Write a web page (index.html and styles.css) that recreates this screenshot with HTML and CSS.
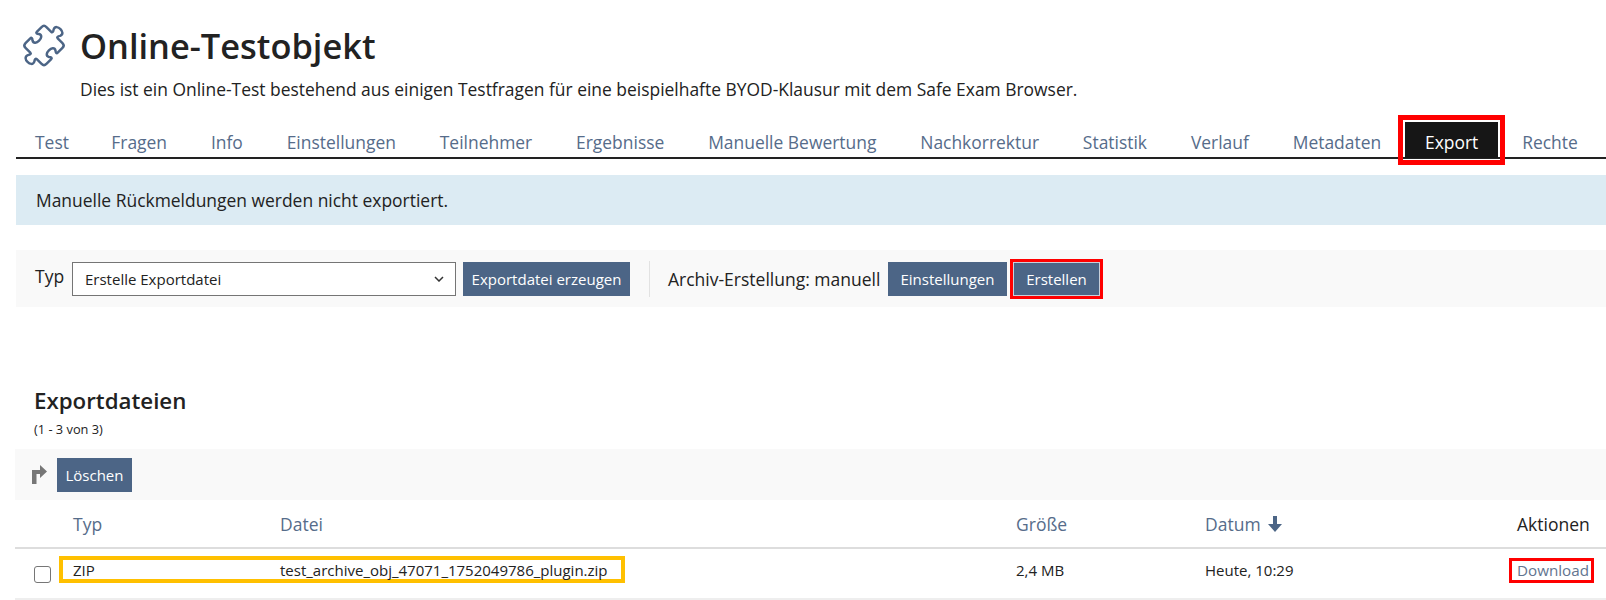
FILE: index.html
```html
<!DOCTYPE html>
<html lang="de">
<head>
<meta charset="utf-8">
<title>Online-Testobjekt</title>
<link rel="stylesheet" href="styles.css">
</head>
<body>
<header class="head">
  <svg class="puzzle" viewBox="-62 -62 124 124" aria-hidden="true"><path transform="rotate(45)" d="M-39 -30 Q-39 -39 -30 -39 L-12 -39 C-8 -39 -8 -43 -12 -48 C-20 -66 20 -66 12 -48 C8 -43 8 -39 12 -39 L30 -39 Q39 -39 39 -30 L39 -12 C39 -8 35 -8 31 -12 C14 -22 14 22 31 12 C35 8 39 8 39 12 L39 30 Q39 39 30 39 L12 39 C8 39 8 43 12 48 C20 66 -20 66 -12 48 C-8 43 -8 39 -12 39 L-30 39 Q-39 39 -39 30 L-39 12 C-39 8 -35 8 -31 12 C-14 22 -14 -22 -31 -12 C-35 -8 -39 -8 -39 -12 Z"/></svg>
  <div class="head-text">
    <h1 class="title">Online-Testobjekt</h1>
    <p class="desc">Dies ist ein Online-Test bestehend aus einigen Testfragen für eine beispielhafte BYOD-Klausur mit dem Safe Exam Browser.</p>
  </div>
</header>
<nav class="tabs">
  <a class="tab">Test</a>
  <a class="tab">Fragen</a>
  <a class="tab">Info</a>
  <a class="tab">Einstellungen</a>
  <a class="tab">Teilnehmer</a>
  <a class="tab">Ergebnisse</a>
  <a class="tab">Manuelle Bewertung</a>
  <a class="tab">Nachkorrektur</a>
  <a class="tab">Statistik</a>
  <a class="tab">Verlauf</a>
  <a class="tab">Metadaten</a>
  <a class="tab tab-active">Export</a>
  <a class="tab">Rechte</a>
</nav>
<div class="info">Manuelle Rückmeldungen werden nicht exportiert.</div>
<div class="toolbar">
  <label class="type-label" for="typ">Typ</label>
  <select class="select" id="typ"><option>Erstelle Exportdatei</option></select>
  <button class="btn btn-create">Exportdatei erzeugen</button>
  <span class="sep"></span>
  <span class="archive">Archiv-Erstellung: manuell</span>
  <button class="btn btn-settings">Einstellungen</button>
  <button class="btn btn-mark">Erstellen</button>
</div>
<section class="files">
  <h2 class="files-title">Exportdateien</h2>
  <p class="count">(1 - 3 von 3)</p>
  <div class="actions">
    <svg class="turn" viewBox="0 0 15 19" aria-hidden="true"><path d="M0 19 V5 H8 V0 L15 6.5 L8 13 V9 H4.5 V19 Z"/></svg>
    <button class="btn btn-delete">Löschen</button>
  </div>
  <div class="row row-head">
    <span class="c-check"></span>
    <div class="c-main">
      <a class="c-type sort">Typ</a>
      <a class="c-file sort">Datei</a>
    </div>
    <a class="c-size sort">Größe</a>
    <span class="c-date"><a class="sort">Datum</a><svg class="down" viewBox="0 0 14 16" aria-hidden="true"><path d="M5 0 H9 V8 H14 L7 16 L0 8 H5 Z"/></svg></span>
    <span class="c-act">Aktionen</span>
  </div>
  <div class="row row-body">
    <span class="c-check"><input class="check" type="checkbox" aria-label="Auswählen"></span>
    <div class="c-main c-mark">
      <span class="c-type">ZIP</span>
      <span class="c-file">test_archive_obj_47071_1752049786_plugin.zip</span>
    </div>
    <span class="c-size">2,4 MB</span>
    <span class="c-date">Heute, 10:29</span>
    <span class="c-act"><a class="dl">Download</a></span>
  </div>
</section>
</body>
</html>
```
FILE: styles.css
```css
* { box-sizing: border-box; }
html, body { margin: 0; padding: 0; }
body {
  background: #fff;
  color: #222;
  font-family: "Open Sans", sans-serif;
  font-size: 16px;
  height: 600px;
  overflow: hidden;
}
.head { display: flex; padding: 22px 0 0 19px; height: 116px; }
.puzzle { width: 50px; height: 47px; flex: none; margin-right: 11px; }
.puzzle path { fill: none; stroke: #4c6586; stroke-width: 6.5; stroke-linejoin: round; }
.head-text { display: flex; flex-direction: column; }
.title { margin: 0; font-size: 34.4px; line-height: 48px; font-weight: 600; color: #222; }
.desc { margin: 8px 0 0; font-size: 17.43px; line-height: 22px; color: #222; }
.tabs {
  display: flex;
  gap: 3.85px;
  height: 43px;
  margin-left: 16px;
  padding: 6px 0 0 0;
  border-bottom: 2px solid #222;
}
.tab {
  display: flex;
  align-items: center;
  padding: 4px 20px 0;
  height: 36px;
  font-size: 17.45px;
  color: #566c8a;
}
.tab:first-child { margin-left: -1px; margin-right: -1.5px; }
.tab-active {
  background: #161616;
  color: #fff;
  outline: 5px solid #f00;
  outline-offset: 2px;
}
.info {
  margin: 16px 0 0 16px;
  height: 50px;
  line-height: 50px;
  padding-left: 20px;
  background: #dcebf3;
  font-size: 17.45px;
}
.toolbar {
  display: flex;
  align-items: center;
  margin: 25px 0 0 16px;
  height: 57px;
  padding-left: 19px;
  background: #f9f9f9;
}
.type-label { font-size: 17.5px; width: 37px; margin-bottom: 5px; }
.select {
  appearance: none;
  width: 384px;
  height: 34px;
  padding: 0 12px;
  background: #fff url("data:image/svg+xml,%3Csvg xmlns='http://www.w3.org/2000/svg' width='10' height='6'%3E%3Cpath d='M1 1l4 4 4-4' fill='none' stroke='%23333' stroke-width='1.5'/%3E%3C/svg%3E") no-repeat right 11px center;
  border: 1px solid #757575;
  border-radius: 0;
  font: 15px "Open Sans", sans-serif;
  color: #222;
}
.btn {
  height: 34px;
  padding: 0 6px;
  border: 1px solid #4c6586;
  border-radius: 0;
  background: #4c6586;
  color: #fff;
  font: 15px "Open Sans", sans-serif;
  text-align: center;
}
.btn-create { width: 167px; margin-left: 7px; }
.sep { width: 1px; height: 36px; background: #e2e2e2; margin-left: 19px; }
.archive { font-size: 17.5px; margin-left: 18px; width: 220px; }
.btn-settings { width: 119px; }
.btn-mark {
  width: 87px;
  margin-left: 6px;
  border-color: #c9d0da;
  outline: 3px solid #f00;
  outline-offset: 0;
}
.files { margin: 79px 0 0 15px; }
.files-title { margin: 0; padding-left: 19px; font-size: 22.3px; line-height: 30px; font-weight: 600; color: #222; }
.count { margin: 5px 0 0; padding-left: 19px; font-size: 12.8px; line-height: 16px; }
.actions {
  display: flex;
  align-items: center;
  margin-top: 12px;
  height: 51px;
  padding-left: 17px;
  background: #f9f9f9;
}
.turn { width: 15px; height: 19px; fill: #777; }
.btn-delete { width: 75px; margin-left: 10px; }
.row { display: flex; align-items: center; }
.row-head { height: 49px; border-bottom: 2px solid #ddd; }
.row-body { height: 51px; border-bottom: 2px solid #eee; padding-bottom: 8px; font-size: 15px; }
.c-check { width: 44px; flex: none; padding-left: 19px; display: flex; }
.check {
  appearance: none;
  margin: 9px 0 0;
  width: 17px;
  height: 17px;
  background: #fff;
  border: 1px solid #767676;
  border-radius: 3px;
}
.c-main { display: flex; align-items: center; width: 566px; flex: none; padding-left: 14px; }
.c-mark { border: 4px solid #ffc000; height: 27px; padding-left: 10px; }
.c-type { width: 207px; flex: none; }
.c-file { flex: none; }
.c-size { width: 189px; margin-left: 391px; flex: none; }
.c-date { width: 312px; flex: none; display: flex; align-items: center; }
.c-act { width: 73px; flex: none; white-space: nowrap; }
.sort { color: #566c8a; font-size: 17.5px; }
.row-head .c-act { font-size: 17.5px; }
.down { width: 14px; height: 16px; fill: #4c6586; margin-left: 7px; }
.row-body .c-act { display: flex; }
.dl {
  color: #62758f;
  font-size: 15.2px;
  line-height: 19px;
  margin: 2px 0 0 -5px;
  padding: 0 2px 0 5px;
  outline: 3px solid #f00;
}
```
